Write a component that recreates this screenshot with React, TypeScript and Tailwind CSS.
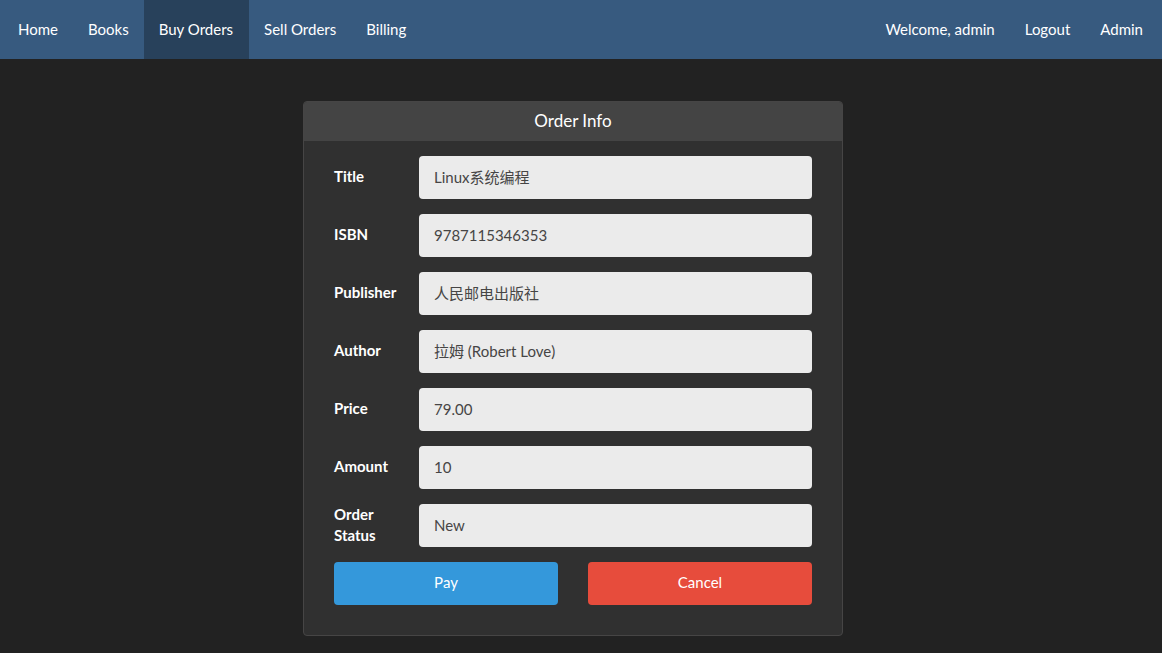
import React from 'react'

const fields: { label: string; value: string }[] = [
  { label: 'Title', value: 'Linux系统编程' },
  { label: 'ISBN', value: '9787115346353' },
  { label: 'Publisher', value: '人民邮电出版社' },
  { label: 'Author', value: '拉姆 (Robert Love)' },
  { label: 'Price', value: '79.00' },
  { label: 'Amount', value: '10' },
  { label: 'Order Status', value: 'New' },
]

const leftLinks = ['Home', 'Books', 'Buy Orders', 'Sell Orders', 'Billing']
const rightLinks = ['Welcome, admin', 'Logout', 'Admin']

export default function App() {
  return (
    <div
      className="min-h-[653px] bg-[#222222] text-white text-[15px] leading-[21px]"
      style={{ fontFamily: 'Lato, "Noto Sans CJK SC", sans-serif' }}
    >
      <nav className="flex h-[59px] items-stretch justify-between bg-[#375a7f] pl-[3px] pr-[4px]">
        <ul className="flex">
          {leftLinks.map((l) => (
            <li
              key={l}
              className={
                'flex items-center px-[15px] ' +
                (l === 'Buy Orders' ? 'bg-[#28415b] pr-[16px]' : '')
              }
            >
              {l}
            </li>
          ))}
        </ul>
        <ul className="flex">
          {rightLinks.map((l) => (
            <li key={l} className="flex items-center px-[15px]">
              {l}
            </li>
          ))}
        </ul>
      </nav>

      <div className="flex justify-center pt-[42px] pr-[16px]">
        <div className="w-[540px] rounded-[4px] border border-[#464545] bg-[#303030]">
          <div className="flex h-[39px] items-center justify-center rounded-t-[3px] bg-[#444444] pb-[2px] text-[17px]">
            Order Info
          </div>
          <form className="flex flex-col gap-[15px] px-[30px] pt-[15px] pb-[30px]">
            {fields.map((f) => (
              <div key={f.label} className="flex items-center">
                <label className="-mt-[2px] w-[85px] pr-[20px] font-bold">{f.label}</label>
                <input
                  readOnly
                  value={f.value}
                  className="h-[43px] flex-1 rounded-[4px] bg-[#ebebeb] px-[15px] pb-[2px] text-[#464545] outline-none"
                />
              </div>
            ))}
            <div className="flex justify-between">
              <button
                type="button"
                className="h-[43px] w-[224px] rounded-[4px] bg-[#3498db] pb-[2px] text-white"
              >
                Pay
              </button>
              <button
                type="button"
                className="h-[43px] w-[224px] rounded-[4px] bg-[#e74c3c] pb-[2px] text-white"
              >
                Cancel
              </button>
            </div>
          </form>
        </div>
      </div>
    </div>
  )
}
